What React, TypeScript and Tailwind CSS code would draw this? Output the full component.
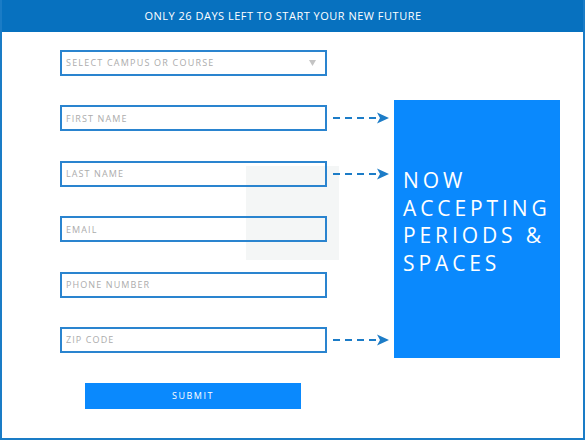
import React from 'react';

const fields = [
  { label: 'FIRST NAME', arrow: true },
  { label: 'LAST NAME', arrow: true },
  { label: 'EMAIL', arrow: false },
  { label: 'PHONE NUMBER', arrow: false },
  { label: 'ZIP CODE', arrow: true },
];

const Arrow = () => (
  <svg width="56" height="12" viewBox="0 0 56 12" className="block">
    <line x1="0" y1="6" x2="46" y2="6" stroke="#1c7cc7" strokeWidth="2" strokeDasharray="7 5" />
    <path d="M44 0.5 L56 6 L44 11.5 L47 6 Z" fill="#1c7cc7" />
  </svg>
);

const App = () => {
  return (
    <div className="w-[585px] h-[440px] bg-white border-x-2 border-b-2 border-[#1a7cc6] flex flex-col font-['Open_Sans',sans-serif] overflow-hidden">
      <div className="h-[32px] bg-[#0771bf] flex items-center justify-center shrink-0 pr-[19px]">
        <span className="text-white text-[11px] tracking-[0.5px]">ONLY 26 DAYS LEFT TO START YOUR NEW FUTURE</span>
      </div>

      <div className="relative flex pl-[58px]">
        <div className="absolute left-[244px] top-[134px] w-[93px] h-[94px] bg-[#f4f6f6]" />

        <div className="relative flex flex-col pt-[18px] gap-[29.4px]">
          <div className="w-[267px] h-[26px] border-2 border-[#2a84cf] flex items-center justify-between pl-[4px] pr-[9px]">
            <span className="text-[9px] tracking-[1.2px] text-[#acacac]">SELECT CAMPUS OR COURSE</span>
            <svg width="7" height="6" viewBox="0 0 7 6">
              <path d="M0 0 H7 L3.5 6 Z" fill="#c4c4c4" />
            </svg>
          </div>

          {fields.map((f) => (
            <div key={f.label} className="flex items-center">
              <input
                placeholder={f.label}
                className="w-[267px] h-[26px] border-2 border-[#2a84cf] bg-transparent pl-[4px] text-[9px] tracking-[1.1px] outline-none placeholder:text-[#acacac]"
              />
              <div className="w-[56px] ml-[6px]">{f.arrow && <Arrow />}</div>
            </div>
          ))}

          <div className="pl-[25px] -mt-[1px]">
            <button className="w-[216px] h-[26px] bg-[#0a89fd] text-white text-[9px] tracking-[1.5px]">SUBMIT</button>
          </div>
        </div>

        <div className="relative ml-[5px] mt-[68px] w-[166px] h-[258px] bg-[#0a89fd] pl-[9px] pt-[67px]">
          <p className="text-white text-[21px] leading-[27.5px] tracking-[3.9px]">
            NOW
            <br />
            ACCEPTING
            <br />
            PERIODS &amp;
            <br />
            SPACES
          </p>
        </div>
      </div>
    </div>
  );
};

export default App;
